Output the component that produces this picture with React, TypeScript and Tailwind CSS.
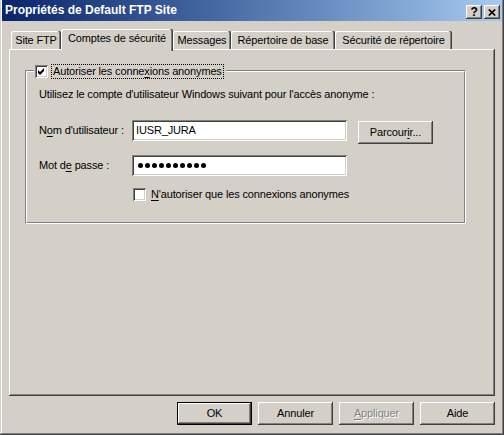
import type { ReactNode } from "react";

const raised =
  "shadow-[inset_-1px_-1px_0_#404040,inset_1px_1px_0_#ffffff,inset_-2px_-2px_0_#808080,inset_2px_2px_0_#d4d0c8]";
const sunken =
  "shadow-[inset_1px_1px_0_#808080,inset_-1px_-1px_0_#ffffff,inset_2px_2px_0_#404040,inset_-2px_-2px_0_#d4d0c8]";

function Key({ children }: { children: ReactNode }) {
  return <span className="underline decoration-1 underline-offset-[2px]">{children}</span>;
}

function Checkbox({ checked }: { checked?: boolean }) {
  return (
    <span className={`flex h-[13px] w-[13px] shrink-0 items-center justify-center bg-white ${sunken}`}>
      {checked ? (
        <svg width="13" height="13" viewBox="0 0 13 13">
          <polygon points="3,5 5,7 9,3 9,6 5,10 3,8" fill="#000" />
        </svg>
      ) : null}
    </span>
  );
}

function Tab({ label, width, active }: { label: string; width: string; active?: boolean }) {
  const edge =
    "shadow-[inset_-1px_0_0_#404040,inset_-2px_0_0_#808080,inset_1px_1px_0_#ffffff]";
  if (active) {
    return (
      <div
        className={`relative z-10 -mb-[2px] flex h-[22px] ${width} items-center justify-center rounded-t-[2px] bg-[#d4d0c8] pb-[4px] ${edge}`}
      >
        {label}
      </div>
    );
  }
  return (
    <div
      className={`flex h-[18px] ${width} items-center justify-center rounded-t-[2px] bg-[#d4d0c8] ${edge}`}
    >
      {label}
    </div>
  );
}

function Button({
  children,
  isDefault,
  disabled,
}: {
  children: ReactNode;
  isDefault?: boolean;
  disabled?: boolean;
}) {
  const frame = isDefault
    ? "shadow-[inset_0_0_0_1px_#000000,inset_-2px_-2px_0_#404040,inset_2px_2px_0_#ffffff,inset_-3px_-3px_0_#808080]"
    : raised;
  return (
    <button
      className={`flex h-[23px] w-[75px] items-center justify-center bg-[#d4d0c8] ${frame} ${
        disabled ? "text-[#808080] [text-shadow:1px_1px_0_#ffffff]" : "text-black"
      }`}
    >
      <span>{children}</span>
    </button>
  );
}

export default function App() {
  return (
    <div className="flex h-[435px] w-[504px] flex-col bg-[#d4d0c8] px-[2px] pb-[2px] font-['Liberation_Sans',Arial,sans-serif] text-[11px] tracking-[-0.15px] text-black shadow-[inset_-1px_-1px_0_#404040,inset_1px_0_0_#d4d0c8,inset_-2px_-2px_0_#808080,inset_2px_0_0_#ffffff]">
      {/* title bar */}
      <div className="flex h-[21px] shrink-0 items-start justify-between bg-linear-to-r from-[#0a246a] to-[#a6caf0] pr-[2px]">
        <span className="pl-[3px] pt-[3px] text-[12px] font-bold leading-[14px] tracking-normal text-white">
          Propriétés de Default FTP Site
        </span>
        <div className="mt-[5px] flex gap-[2px]">
          <span
            className={`flex h-[14px] w-[16px] items-center justify-center bg-[#d4d0c8] text-[12px] font-bold leading-none ${raised}`}
          >
            ?
          </span>
          <span className={`flex h-[14px] w-[16px] items-center justify-center bg-[#d4d0c8] ${raised}`}>
            <svg width="8" height="7" viewBox="0 0 8 7">
              <path d="M0.8 0.5 L7.2 6.5 M7.2 0.5 L0.8 6.5" stroke="#000" strokeWidth="1.7" />
            </svg>
          </span>
        </div>
      </div>

      {/* tabs */}
      <div className="ml-[9px] mt-[8px] flex h-[20px] shrink-0 items-end">
        <Tab label="Site FTP" width="w-[50px]" />
        <Tab label="Comptes de sécurité" width="w-[112px]" active />
        <Tab label="Messages" width="w-[58px]" />
        <Tab label="Répertoire de base" width="w-[104px]" />
        <Tab label="Sécurité de répertoire" width="w-[117px]" />
      </div>

      {/* panel */}
      <div className="ml-[7px] h-[347px] w-[486px] shrink-0 pl-[16px] pt-[21px] shadow-[inset_-1px_-1px_0_#404040,inset_1px_1px_0_#ffffff,inset_-2px_-2px_0_#808080]">
        <div className="relative h-[154px] w-[441px] border-b border-l border-r border-t border-b-white border-l-[#808080] border-r-white border-t-[#808080]">
          <div className="absolute -top-[7px] left-[8px] flex h-[15px] items-center bg-[#d4d0c8] pl-[1px] pr-[2px]">
            <Checkbox checked />
            <span className="ml-[3px] flex h-[15px] items-center border border-dotted border-black px-[1px]">
              <span>
                Autoriser les conne<Key>x</Key>ions anonymes
              </span>
            </span>
          </div>
          <div className="h-full w-full border-b border-l border-r border-t border-b-[#808080] border-l-white border-r-[#808080] border-t-white pl-[12px] pt-[16px]">
            <p className="leading-[13px]">
              Utilisez le compte d'utilisateur Windows suivant pour l'accès anonyme :
            </p>

            <div className="mt-[19px] flex items-start">
              <span className="flex h-[21px] w-[93px] items-center">
                <span>
                  N<Key>o</Key>m d'utilisateur :
                </span>
              </span>
              <div className={`flex h-[21px] w-[215px] items-center bg-white pl-[4px] ${sunken}`}>
                IUSR_JURA
              </div>
              <div className="ml-[11px] mt-[1px]">
                <Button>
                  Parcour<Key>i</Key>r...
                </Button>
              </div>
            </div>

            <div className="mt-[11px] flex items-start">
              <span className="flex h-[21px] w-[93px] items-center">
                <span>
                  Mot d<Key>e</Key> passe :
                </span>
              </span>
              <div
                className={`flex h-[21px] w-[215px] items-center gap-[2px] bg-white pl-[6px] ${sunken}`}
                aria-label="mot de passe"
              >
                {Array.from({ length: 10 }).map((_, i) => (
                  <span key={i} className="h-[5px] w-[5px] rounded-full bg-black" />
                ))}
              </div>
            </div>

            <div className="ml-[94px] mt-[10px] flex items-center">
              <Checkbox />
              <span className="ml-[5px]">
                <Key>N</Key>'autoriser que les connexions anonymes
              </span>
            </div>
          </div>
        </div>
      </div>

      {/* dialog buttons */}
      <div className="mr-[7px] mt-[6px] flex justify-end gap-[6px]">
        <Button isDefault>OK</Button>
        <Button>Annuler</Button>
        <Button disabled>
          <Key>A</Key>ppliquer
        </Button>
        <Button>Aide</Button>
      </div>
    </div>
  );
}
